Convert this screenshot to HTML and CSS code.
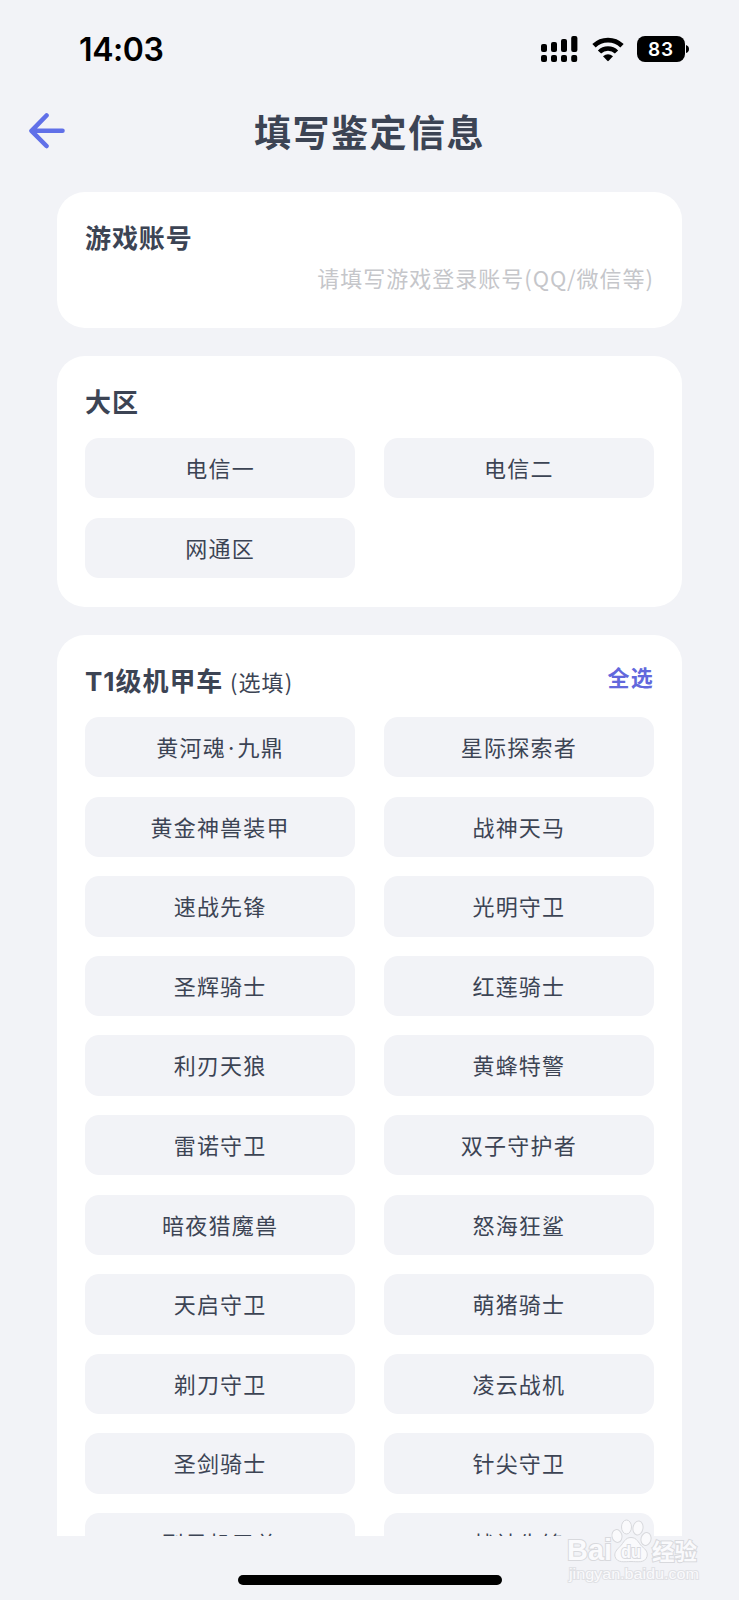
FILE: index.html
```html
<!DOCTYPE html>
<html lang="zh-CN">
<head>
    <meta charset="UTF-8">
    <meta name="viewport" content="width=device-width, initial-scale=1.0">
    <title>填写鉴定信息</title>
    <link rel="stylesheet" href="styles.css">
</head>
<body>
    <div class="status-bar">
        <span class="time">14:03</span>
        <div class="status-icons">
            <svg class="signal" width="37" height="26" viewBox="0 0 37 26">
                <rect x="0" y="8" width="6" height="8" rx="2"/>
                <rect x="10" y="6" width="6" height="10" rx="2"/>
                <rect x="20" y="3" width="6" height="13" rx="2"/>
                <rect x="30.2" y="0" width="6.2" height="16" rx="2"/>
                <rect x="0" y="19" width="6" height="7" rx="2"/>
                <rect x="10" y="19" width="6" height="7" rx="2"/>
                <rect x="20" y="19" width="6" height="7" rx="2"/>
                <rect x="30.2" y="19" width="6" height="7" rx="2"/>
            </svg>
            <svg class="wifi" width="32" height="25" viewBox="0 0 32 25">
                <path d="M2 8.800a20 20 0 0 1 28 0" fill="none" stroke="#000" stroke-width="4.800"/>
                <path d="M7.500 15a12 12 0 0 1 17 0" fill="none" stroke="#000" stroke-width="4.600"/>
                <path d="M11 19.300q5-4.300 10 0l-4.300 4.500q-.7.700-1.400 0z"/>
            </svg>
            <div class="battery">83</div>
            <svg class="battery-cap" width="3" height="8" viewBox="0 0 3 8"><path d="M0 0q3 1 3 4t-3 4z"/></svg>
        </div>
    </div>

    <header>
        <svg class="back" width="36" height="36" viewBox="0 0 36 36">
            <path d="M17.500 2.500L2.500 17.800l15 15.200M3 17.800h30.500"/>
        </svg>
        <h1>填写鉴定信息</h1>
    </header>

    <main class="content">
        <section class="card account">
            <h2>游戏账号</h2>
            <div class="placeholder">请填写游戏登录账号(QQ/微信等)</div>
        </section>

        <section class="card">
            <div class="card-title">
                <h2>大区</h2>
            </div>
            <div class="options">
                <div class="option">电信一</div>
                <div class="option">电信二</div>
                <div class="option">网通区</div>
            </div>
        </section>

        <section class="card">
            <div class="card-title">
                <h2><span class="level">T1</span>级机甲车 <small>(选填)</small></h2>
                <a class="select-all">全选</a>
            </div>
            <div class="options">
                <div class="option">黄河魂<span class="dot">·</span>九鼎</div>
                <div class="option">星际探索者</div>
                <div class="option">黄金神兽装甲</div>
                <div class="option">战神天马</div>
                <div class="option">速战先锋</div>
                <div class="option">光明守卫</div>
                <div class="option">圣辉骑士</div>
                <div class="option">红莲骑士</div>
                <div class="option">利刃天狼</div>
                <div class="option">黄蜂特警</div>
                <div class="option">雷诺守卫</div>
                <div class="option">双子守护者</div>
                <div class="option">暗夜猎魔兽</div>
                <div class="option">怒海狂鲨</div>
                <div class="option">天启守卫</div>
                <div class="option">萌猪骑士</div>
                <div class="option">剃刀守卫</div>
                <div class="option">凌云战机</div>
                <div class="option">圣剑骑士</div>
                <div class="option">针尖守卫</div>
                <div class="option">烈风机甲兽</div>
                <div class="option">战神先锋</div>
            </div>
        </section>
    </main>

    <footer>
        <div class="home-bar"></div>
    </footer>

    <!-- watermark over the lower right corner -->
    <svg class="watermark" width="140" height="68" viewBox="0 0 140 68">
        <text class="wm-logo" x="1" y="47" textLength="45" lengthAdjust="spacingAndGlyphs">Bai</text>
        <g class="wm-paw">
            <ellipse cx="51" cy="23" rx="5" ry="6.500" transform="rotate(-12 51 23)"/>
            <ellipse cx="60.500" cy="14" rx="5" ry="7"/>
            <ellipse cx="72" cy="15" rx="5" ry="7" transform="rotate(10 72 15)"/>
            <ellipse cx="80" cy="26" rx="5" ry="6.500" transform="rotate(15 80 26)"/>
            <path d="M65 24.500c6 0 7 5 11 9 4 3 6 6 5 10-2 7-10 5-16 5s-14 2-16-5c-1-4 2-7 5-10 4-4 5-9 11-9z"/>
        </g>
        <text class="wm-du" x="55" y="45" textLength="20" lengthAdjust="spacingAndGlyphs">du</text>
        <text class="wm-cn" x="86" y="47" textLength="45" lengthAdjust="spacingAndGlyphs">经验</text>
        <text class="wm-url" x="3" y="66" textLength="130" lengthAdjust="spacingAndGlyphs">jingyan.baidu.com</text>
    </svg>
</body>
</html>
```
FILE: styles.css
```css
* {
    box-sizing: border-box;
}
body {
    margin: 0;
    height: 1600px;
    display: flex;
    flex-direction: column;
    overflow: hidden;
    background-color: #f2f3f7;
    color: #3c4454;
    font-family: "Noto Sans CJK SC", sans-serif;
}
.status-bar {
    height: 98px;
    padding: 0 50px 0 79px;
    display: flex;
    justify-content: space-between;
    align-items: center;
    color: #000;
}
.time {
    font-family: Inter, sans-serif;
    font-size: 32px;
    font-weight: 600;
    letter-spacing: -0.4px;
}
.status-icons {
    display: flex;
    align-items: center;
}
.wifi {
    margin-left: 13.5px;
}
.battery {
    width: 48px;
    height: 26px;
    margin-left: 13.5px;
    border-radius: 8px;
    background-color: #000;
    color: #fff;
    font: 600 19px/27px Inter, sans-serif;
    letter-spacing: 0.8px;
    text-align: center;
}
.battery-cap {
    margin-left: 1px;
}
header {
    height: 93px;
    padding: 0 29px;
    display: grid;
    grid-template-columns: 36px 1fr 36px;
    align-items: start;
    text-align: center;
}
.back {
    margin-top: 15px;
    fill: none;
    stroke: #6070e8;
    stroke-width: 4.6;
    stroke-linecap: round;
    stroke-linejoin: round;
}
h1 {
    margin: 6px 0 0;
    font-size: 37px;
    font-weight: 700;
    line-height: 54px;
    letter-spacing: 1.5px;
}
.content {
    height: 1344.5px;
    padding: 0.6px 57px 0;
    overflow: hidden;
}
.card {
    margin-bottom: 28.2px;
    padding: 25px 28px 29px;
    border-radius: 28px;
    background-color: #fff;
}
.account {
    height: 136.5px;
}
h2 {
    margin: 0;
    font-size: 26px;
    font-weight: 700;
    line-height: 39px;
    letter-spacing: 0.9px;
    white-space: nowrap;
}
h2 small {
    font-size: 22px;
    font-weight: 400;
    letter-spacing: 1.1px;
}
.level {
    font-family: Inter, sans-serif;
    letter-spacing: 1px;
}
.placeholder {
    color: #c5c6ca;
    font-size: 22px;
    font-weight: 400;
    line-height: 34px;
    letter-spacing: 1px;
    text-align: right;
    margin-top: 4px;
}
.card-title {
    height: 56.7px;
    display: flex;
    justify-content: space-between;
}
.select-all {
    color: #6268dc;
    font-size: 22px;
    font-weight: 700;
    line-height: 33px;
    letter-spacing: 1.2px;
}
.options {
    display: grid;
    grid-template-columns: 1fr 1fr;
    gap: 19.1px 28.5px;
}
.option {
    height: 60.5px;
    border-radius: 14px;
    background-color: #f2f3f7;
    font-size: 22px;
    font-weight: 400;
    line-height: 59px;
    letter-spacing: 1.2px;
    text-align: center;
}
.dot {
    font-family: Inter, sans-serif;
    margin: 0 2px;
}
footer {
    height: 64px;
    padding-top: 39px;
}
.home-bar {
    width: 264px;
    height: 10px;
    margin: 0 auto;
    border-radius: 5px;
    background-color: #000;
}
.watermark {
    position: absolute;
    left: 566px;
    top: 1513px;
    overflow: visible;
    fill: #fafafc;
    stroke: #d8d9dd;
    stroke-width: 1;
}
.watermark text {
    paint-order: stroke;
    stroke-width: 2;
}
.wm-logo {
    font: 700 29px "Liberation Sans", sans-serif;
}
.wm-du {
    font: 700 19px "Liberation Sans", sans-serif;
}
.wm-cn {
    font: 700 23px "Noto Sans CJK SC", sans-serif;
}
.watermark .wm-url {
    font: 400 15.5px "Liberation Sans", sans-serif;
    stroke: #e0e1e5;
}
```
